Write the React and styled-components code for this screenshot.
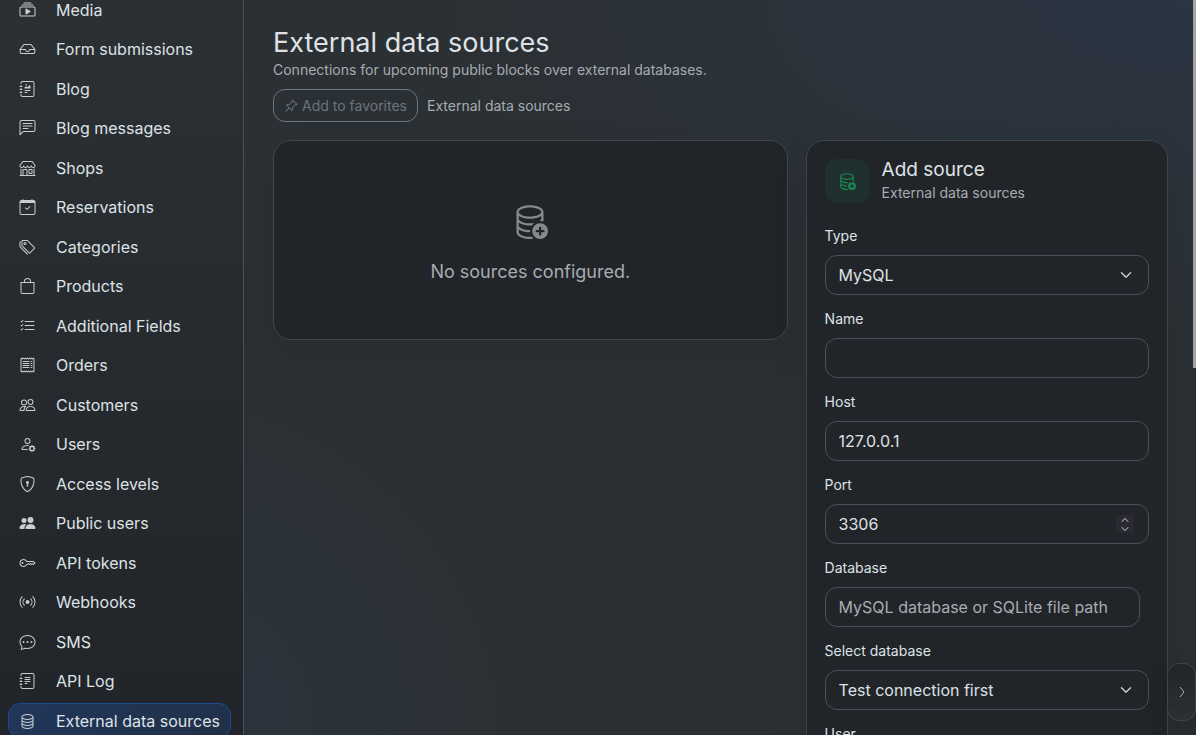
import React from 'react';
import styled, { createGlobalStyle, ThemeProvider } from 'styled-components';
import {
  BsBag,
  BsBroadcast,
  BsCalendarCheck,
  BsChatDots,
  BsChatLeftText,
  BsChevronDown,
  BsChevronRight,
  BsChevronUp,
  BsCollectionPlay,
  BsDatabase,
  BsDatabaseAdd,
  BsInbox,
  BsJournalRichtext,
  BsJournalText,
  BsKey,
  BsListCheck,
  BsPeople,
  BsPeopleFill,
  BsPersonGear,
  BsPinAngle,
  BsReceipt,
  BsShieldLock,
  BsShop,
  BsTags,
} from 'react-icons/bs';

const theme = {
  text: '#dee2e6',
  muted: '#a7acb1',
  faint: '#6c757d',
  page: '#2b3035',
  panel: '#212529',
  border: '#495057',
  cardBorder: '#41464b',
  primary: '#0d6efd',
  success: '#198754',
};

const GlobalStyle = createGlobalStyle`
  *, *::before, *::after {
    box-sizing: border-box;
  }

  body {
    margin: 0;
    font-family: Inter, "Liberation Sans", sans-serif;
    font-size: 16px;
    line-height: 24px;
    color: ${theme.text};
    background: ${theme.page};
  }
`;

const Shell = styled.div`
  display: flex;
  height: 100vh;
  overflow: hidden;
  background:
    radial-gradient(ellipse 62% 45% at 100% 0%, rgba(42, 56, 76, 0.6), transparent),
    radial-gradient(circle at 14% 100%, rgba(42, 56, 74, 0.5), transparent 26%),
    #2b3034;
`;

const Sidebar = styled.aside`
  display: flex;
  flex: 0 0 244px;
  border-right: 1px solid ${theme.border};
  background: linear-gradient(180deg, #2b3035, #212529);
`;

const NavList = styled.ul`
  display: flex;
  flex: 1;
  flex-direction: column;
  justify-content: space-between;
  margin: -8px 12px -3px 8px;
  padding: 0;
  list-style: none;
`;

const NavLink = styled.a`
  display: flex;
  align-items: center;
  gap: 20px;
  height: 35px;
  padding: 0 10px;
  border: 1px solid ${props => (props.$active ? '#1a4b96' : 'transparent')};
  border-radius: 12px;
  background: ${props => (props.$active ? 'linear-gradient(135deg, #20365a, #213048)' : 'none')};
  color: ${theme.text};
  text-decoration: none;
  white-space: nowrap;

  svg {
    flex: none;
    width: 17px;
    height: 16px;
    color: #c9cdd1;
  }
`;

const Main = styled.main`
  flex: 1;
  min-width: 0;
  padding: 26px 28px 26px 29px;
  overflow-y: auto;
  scrollbar-width: none;
`;

const Title = styled.h1`
  margin: 0;
  font-size: 27px;
  font-weight: 400;
  line-height: 33px;
`;

const Lead = styled.p`
  margin: 0;
  font-size: 14px;
  line-height: 22px;
  color: ${theme.muted};
`;

const Toolbar = styled.div`
  display: flex;
  align-items: center;
  gap: 9px;
  margin: 8px 0 18px;
  font-size: 14px;
  color: ${theme.muted};
`;

const FavoriteButton = styled.button`
  display: flex;
  align-items: center;
  gap: 4px;
  height: 33px;
  padding: 0 10px;
  border: 1px solid ${theme.faint};
  border-radius: 12px;
  background: none;
  color: ${theme.faint};
  font: inherit;
`;

const Columns = styled.div`
  display: grid;
  grid-template-columns: repeat(12, minmax(0, 1fr));
  align-items: start;
  gap: 18px;
`;

const Card = styled.section`
  grid-column: span ${props => props.$span};
  padding: 18px;
  border: 1px solid ${theme.cardBorder};
  border-radius: 18px;
  background: ${theme.panel};
  box-shadow: 0 16px 40px rgba(0, 0, 0, 0.08);
`;

const EmptyState = styled.div`
  display: flex;
  flex-direction: column;
  align-items: center;
  gap: 19px;
  padding: 44px 0 36px;
  font-size: 18px;
  line-height: 27px;
  color: ${theme.muted};

  svg {
    width: 36px;
    height: 36px;
    color: #868a8e;
  }
`;

const CardHeader = styled.header`
  display: flex;
  gap: 13px;
  margin-bottom: 20px;
`;

const IconTile = styled.span`
  display: grid;
  place-items: center;
  width: 44px;
  height: 44px;
  border-radius: 12px;
  background: #20302f;
  color: ${theme.success};
  font-size: 18px;
`;

const CardTitle = styled.h2`
  margin: 0;
  font-size: 19px;
  font-weight: 400;
  line-height: 22px;
`;

const CardSubtitle = styled.div`
  font-size: 14px;
  line-height: 24px;
  color: ${theme.muted};
`;

const Form = styled.form`
  display: grid;
  gap: 13px;
`;

const Field = styled.div`
  display: grid;
  gap: 9px;
  padding-right: ${props => (props.$inset ? '9px' : '0')};
`;

const Label = styled.label`
  font-size: 14px;
  line-height: 21px;
`;

const ControlWrap = styled.div`
  position: relative;
`;

const Control = styled.input`
  display: block;
  width: 100%;
  height: 40px;
  padding: 0 13px;
  border: 1px solid ${theme.border};
  border-radius: 12px;
  outline: 0;
  appearance: none;
  background: ${theme.panel};
  color: ${theme.text};
  font: inherit;
  -moz-appearance: textfield;

  &::placeholder {
    color: ${theme.muted};
    opacity: 1;
  }

  &::-webkit-inner-spin-button {
    display: none;
  }

  &:focus {
    border-color: ${theme.primary};
  }
`;

const SelectArrow = styled(BsChevronDown)`
  position: absolute;
  top: 14px;
  right: 17px;
  width: 12px;
  height: 12px;
  stroke: currentColor;
  stroke-width: 1;
  pointer-events: none;
`;

const Spinner = styled.div`
  position: absolute;
  top: 11px;
  right: 15px;
  display: grid;
  grid-template-rows: 1fr 1fr;
  width: 18px;
  height: 18px;
  background: #2b2a33;
`;

const SpinButton = styled.button`
  display: grid;
  place-items: center;
  height: 9px;
  padding: 0;
  border: 0;
  background: none;
  color: ${theme.muted};

  svg {
    width: 8px;
    height: 8px;
    stroke: currentColor;
    stroke-width: 1;
  }
`;

const DrawerHandle = styled.button`
  position: fixed;
  right: 0;
  bottom: 14px;
  display: grid;
  place-items: center;
  width: 29px;
  height: 58px;
  padding: 0;
  border: 1px solid #3f454b;
  border-radius: 12px;
  background: linear-gradient(180deg, #212529, #2b3035);
  color: ${theme.muted};
  box-shadow: 0 8px 24px rgba(0, 0, 0, 0.2);

  /* a tall, narrow chevron */
  svg {
    width: 6px;
    height: 12px;
    fill: none;
    stroke: currentColor;
  }
`;

const ScrollThumb = styled.div`
  position: fixed;
  top: 0;
  right: 0;
  width: 3px;
  height: 50vh;
  background: #a3a3a3;
`;

const navItems = [
  { label: 'Media', icon: BsCollectionPlay },
  { label: 'Form submissions', icon: BsInbox },
  { label: 'Blog', icon: BsJournalRichtext },
  { label: 'Blog messages', icon: BsChatLeftText },
  { label: 'Shops', icon: BsShop },
  { label: 'Reservations', icon: BsCalendarCheck },
  { label: 'Categories', icon: BsTags },
  { label: 'Products', icon: BsBag },
  { label: 'Additional Fields', icon: BsListCheck },
  { label: 'Orders', icon: BsReceipt },
  { label: 'Customers', icon: BsPeople },
  { label: 'Users', icon: BsPersonGear },
  { label: 'Access levels', icon: BsShieldLock },
  { label: 'Public users', icon: BsPeopleFill },
  { label: 'API tokens', icon: BsKey },
  { label: 'Webhooks', icon: BsBroadcast },
  { label: 'SMS', icon: BsChatDots },
  { label: 'API Log', icon: BsJournalText },
  { label: 'External data sources', icon: BsDatabase, active: true },
];

function TextField({ id, label, inset, ...rest }) {
  return (
    <Field $inset={inset}>
      <Label htmlFor={id}>{label}</Label>
      <Control id={id} type="text" {...rest} />
    </Field>
  );
}

function SelectField({ id, label, options }) {
  return (
    <Field>
      <Label htmlFor={id}>{label}</Label>
      <ControlWrap>
        <Control as="select" id={id}>
          {options.map(option => (
            <option key={option}>{option}</option>
          ))}
        </Control>
        <SelectArrow aria-hidden="true" />
      </ControlWrap>
    </Field>
  );
}

function PortField() {
  const [port, setPort] = React.useState(3306);

  return (
    <Field>
      <Label htmlFor="port">Port</Label>
      <ControlWrap>
        <Control
          id="port"
          type="number"
          value={port}
          onChange={event => setPort(event.target.value)}
        />
        <Spinner>
          <SpinButton type="button" aria-label="Increase" onClick={() => setPort(Number(port) + 1)}>
            <BsChevronUp />
          </SpinButton>
          <SpinButton type="button" aria-label="Decrease" onClick={() => setPort(Number(port) - 1)}>
            <BsChevronDown />
          </SpinButton>
        </Spinner>
      </ControlWrap>
    </Field>
  );
}

export default function App() {
  return (
    <ThemeProvider theme={theme}>
      <GlobalStyle />
      <Shell>
        <Sidebar>
          <NavList>
            {navItems.map(({ label, icon: Icon, active }) => (
              <li key={label}>
                <NavLink href="#" $active={active} aria-current={active ? 'page' : undefined}>
                  <Icon aria-hidden="true" />
                  {label}
                </NavLink>
              </li>
            ))}
          </NavList>
        </Sidebar>

        <Main>
          <Title>External data sources</Title>
          <Lead>Connections for upcoming public blocks over external databases.</Lead>
          <Toolbar>
            <FavoriteButton type="button">
              <BsPinAngle size={14} aria-hidden="true" />
              Add to favorites
            </FavoriteButton>
            <span>External data sources</span>
          </Toolbar>

          <Columns>
            <Card $span={7}>
              <EmptyState>
                <BsDatabaseAdd aria-hidden="true" />
                No sources configured.
              </EmptyState>
            </Card>

            <Card $span={5}>
              <CardHeader>
                <IconTile>
                  <BsDatabaseAdd aria-hidden="true" />
                </IconTile>
                <div>
                  <CardTitle>Add source</CardTitle>
                  <CardSubtitle>External data sources</CardSubtitle>
                </div>
              </CardHeader>
              <Form>
                <SelectField id="type" label="Type" options={['MySQL', 'SQLite']} />
                <TextField id="name" label="Name" />
                <TextField id="host" label="Host" defaultValue="127.0.0.1" />
                <PortField />
                <TextField
                  id="database"
                  label="Database"
                  placeholder="MySQL database or SQLite file path"
                  inset
                />
                <SelectField id="database-list" label="Select database" options={['Test connection first']} />
                <TextField id="user" label="User" />
              </Form>
            </Card>
          </Columns>
        </Main>

        <DrawerHandle type="button" aria-label="Toggle panel">
          <svg viewBox="0 0 6 12" aria-hidden="true">
            <path d="M1 1l4 5-4 5" />
          </svg>
        </DrawerHandle>
        <ScrollThumb />
      </Shell>
    </ThemeProvider>
  );
}
